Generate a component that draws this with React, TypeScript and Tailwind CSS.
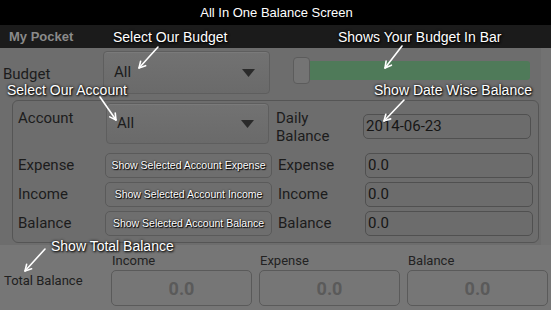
import React from "react";

const Caret = () => (
  <svg width="13" height="8" viewBox="0 0 13 8" className="shrink-0">
    <path d="M0 0 L13 0 L6.5 8 Z" fill="#2a2a2a" />
  </svg>
);

const Dropdown = ({ className }: { className: string }) => (
  <div
    className={`flex items-center justify-between rounded-[4px] border border-[#5e5e5e] bg-gradient-to-b from-[#727272] to-[#6a6a6a] pl-[10px] pr-[14px] shadow-[inset_0_1px_0_#7a7a7a] ${className}`}
  >
    <span className="text-[15px] text-[#1c1c1c]">All</span>
    <Caret />
  </div>
);

const ActionButton = ({ label }: { label: string }) => (
  <div className="flex h-[25px] w-[167px] items-center justify-center rounded-[5px] border border-[#5a5a5a] bg-[#6e6e6e] font-['Liberation_Sans',sans-serif] text-[10.5px] text-white [text-shadow:0_0_2px_#000,1px_1px_1px_#000]">
    {label}
  </div>
);

const ValueField = ({ value }: { value: string }) => (
  <div className="flex h-[25px] w-[168px] items-center rounded-[5px] border border-[#505050] bg-[#6c6c6c] pl-[2px] text-[15px] text-[#161616]">
    {value}
  </div>
);

const Note = ({ text, className }: { text: string; className: string }) => (
  <span
    className={`absolute whitespace-nowrap font-['Liberation_Sans',sans-serif] text-[14px] leading-none text-white [text-shadow:1px_1px_2px_#000,0_0_3px_#000] ${className}`}
  >
    {text}
  </span>
);

const Arrow = ({ x1, y1, x2, y2 }: { x1: number; y1: number; x2: number; y2: number }) => {
  const a = Math.atan2(y2 - y1, x2 - x1);
  const h = 7;
  const p1 = [x2 - h * Math.cos(a - 0.5), y2 - h * Math.sin(a - 0.5)];
  const p2 = [x2 - h * Math.cos(a + 0.5), y2 - h * Math.sin(a + 0.5)];
  return (
    <g stroke="#fff" strokeWidth="1.6" fill="none" strokeLinecap="round" strokeLinejoin="round">
      <line x1={x1} y1={y1} x2={x2} y2={y2} />
      <polyline points={`${p1[0]},${p1[1]} ${x2},${y2} ${p2[0]},${p2[1]}`} />
    </g>
  );
};

const rows = [
  { label: "Expense", button: "Show Selected Account Expense" },
  { label: "Income", button: "Show Selected Account Income" },
  { label: "Balance", button: "Show Selected Account Balance" },
];

const totals = ["Income", "Expense", "Balance"];

export default function App() {
  return (
    <div className="relative h-[310px] w-[551px] overflow-hidden bg-[#6d6d6d] font-['Roboto',sans-serif]">
      {/* title bar */}
      <div className="flex h-[25px] items-center justify-center bg-black pl-[2px] font-['Liberation_Sans',sans-serif] text-[13px] text-white">
        All In One Balance Screen
      </div>
      <div className="flex h-[23px] items-center bg-[#1b1b1b] pl-[9px] font-['Liberation_Sans',sans-serif] text-[13px] font-bold text-[#8a8a8a]">
        My Pocket
      </div>

      {/* budget row */}
      <div className="flex h-[52px] items-start pt-[3px]">
        <span className="mt-[12px] w-[103px] pl-[3px] text-[15px] text-[#1c1c1c]">Budget</span>
        <Dropdown className="h-[43px] w-[167px]" />
        <div className="ml-[23px] mt-[6px] flex items-center">
          <div className="h-[27px] w-[17px] rounded-[4px] border border-[#5c5c5c] bg-[#747474]" />
          <div className="h-[19px] w-[220px] rounded-r-[3px] bg-[#4f7a59]" />
        </div>
      </div>

      {/* account panel */}
      <div className="ml-[12px] mr-[12px] h-[143px] rounded-[6px] border border-[#555] pl-[5px] pt-[2px]">
        <div className="flex h-[41px]">
          <span className="w-[88px] pt-[4px] text-[15px] text-[#1c1c1c]">Account</span>
          <Dropdown className="h-[41px] w-[163px]" />
          <div className="ml-[7px] w-[87px] pt-[6px] text-[15px] leading-[18px] text-[#1c1c1c]">
            Daily
            <br />
            Balance
          </div>
          <div className="mt-[11px]">
            <ValueField value="2014-06-23" />
          </div>
        </div>
        <div className="mt-[9px] flex flex-col gap-[4px]">
          {rows.map((r) => (
            <div key={r.label} className="flex h-[25px] items-center">
              <span className="w-[87px] text-[15px] text-[#1c1c1c]">{r.label}</span>
              <ActionButton label={r.button} />
              <span className="ml-[6px] w-[87px] text-[15px] text-[#1c1c1c]">{r.label}</span>
              <ValueField value="0.0" />
            </div>
          ))}
        </div>
      </div>

      {/* totals */}
      <div className="absolute bottom-0 left-0 right-0 flex h-[65px] bg-[#767676]">
        <span className="mt-[26px] w-[111px] pl-[4px] text-[13px] text-[#202020]">Total Balance</span>
        <div className="flex gap-[7px]">
          {totals.map((t) => (
            <div key={t} className="flex flex-col">
              <span className="h-[25px] pl-[1px] pt-[9px] text-[13px] leading-none text-[#222]">{t}</span>
              <div className="flex h-[36px] w-[141px] items-center justify-center rounded-[5px] border border-[#5a5a5a] text-[18px] font-bold text-[#5a5a5a]">
                0.0
              </div>
            </div>
          ))}
        </div>
      </div>

      {/* right edge strip */}
      <div className="absolute right-0 top-[48px] h-[197px] w-[10px] bg-[#727272]" />

      {/* annotations */}
      <Note text="Select Our Budget" className="left-[113px] top-[30px]" />
      <Note text="Shows Your Budget In Bar" className="left-[338px] top-[30px]" />
      <Note text="Select Our Account" className="left-[7px] top-[83px]" />
      <Note text="Show Date Wise Balance" className="left-[374px] top-[83px]" />
      <Note text="Show Total Balance" className="left-[51px] top-[239px]" />
      <svg className="pointer-events-none absolute left-0 top-0" width="551" height="310">
        <Arrow x1={158} y1={47} x2={139} y2={68} />
        <Arrow x1={402} y1={46} x2={385} y2={68} />
        <Arrow x1={100} y1={97} x2={116} y2={120} />
        <Arrow x1={404} y1={100} x2={384} y2={121} />
        <Arrow x1={45} y1={249} x2={25} y2={271} />
      </svg>
    </div>
  );
}
